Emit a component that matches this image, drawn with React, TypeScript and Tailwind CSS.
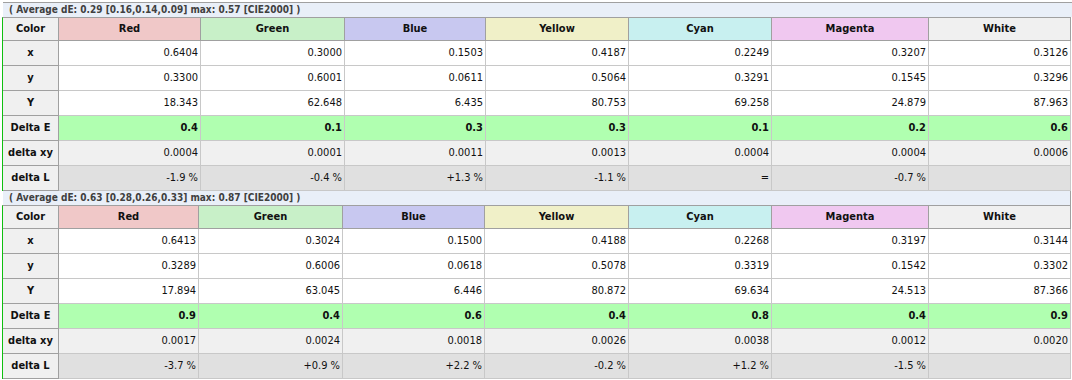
import React from "react";

type Panel = {
  caption: string;
  cols: string;
  rows: { label: string; values: string[]; kind: "w" | "de" | "xy" | "l" }[];
};

const headers = [
  { name: "Red", bg: "bg-[#f0c8c8]" },
  { name: "Green", bg: "bg-[#c8f0c8]" },
  { name: "Blue", bg: "bg-[#c8c8f0]" },
  { name: "Yellow", bg: "bg-[#f0f0c8]" },
  { name: "Cyan", bg: "bg-[#c8f0f0]" },
  { name: "Magenta", bg: "bg-[#f0c8f0]" },
  { name: "White", bg: "bg-[#f0f0f0]" },
];

const panels: Panel[] = [
  {
    caption: "( Average dE: 0.29 [0.16,0.14,0.09] max: 0.57 [CIE2000] )",
    cols: "grid-cols-[56px_142px_144px_141px_143px_143px_157px_142px]",
    rows: [
      { label: "x", kind: "w", values: ["0.6404", "0.3000", "0.1503", "0.4187", "0.2249", "0.3207", "0.3126"] },
      { label: "y", kind: "w", values: ["0.3300", "0.6001", "0.0611", "0.5064", "0.3291", "0.1545", "0.3296"] },
      { label: "Y", kind: "w", values: ["18.343", "62.648", "6.435", "80.753", "69.258", "24.879", "87.963"] },
      { label: "Delta E", kind: "de", values: ["0.4", "0.1", "0.3", "0.3", "0.1", "0.2", "0.6"] },
      { label: "delta xy", kind: "xy", values: ["0.0004", "0.0001", "0.0011", "0.0013", "0.0004", "0.0004", "0.0006"] },
      { label: "delta L", kind: "l", values: ["-1.9 %", "-0.4 %", "+1.3 %", "-1.1 %", "=", "-0.7 %", ""] },
    ],
  },
  {
    caption: "( Average dE: 0.63 [0.28,0.26,0.33] max: 0.87 [CIE2000] )",
    cols: "grid-cols-[56px_140px_144px_142px_144px_143px_157px_142px]",
    rows: [
      { label: "x", kind: "w", values: ["0.6413", "0.3024", "0.1500", "0.4188", "0.2268", "0.3197", "0.3144"] },
      { label: "y", kind: "w", values: ["0.3289", "0.6006", "0.0618", "0.5078", "0.3319", "0.1542", "0.3302"] },
      { label: "Y", kind: "w", values: ["17.894", "63.045", "6.446", "80.872", "69.634", "24.513", "87.366"] },
      { label: "Delta E", kind: "de", values: ["0.9", "0.4", "0.6", "0.4", "0.8", "0.4", "0.9"] },
      { label: "delta xy", kind: "xy", values: ["0.0017", "0.0024", "0.0018", "0.0026", "0.0038", "0.0012", "0.0020"] },
      { label: "delta L", kind: "l", values: ["-3.7 %", "+0.9 %", "+2.2 %", "-0.2 %", "+1.2 %", "-1.5 %", ""] },
    ],
  },
];

const rowBg: Record<string, string> = {
  w: "bg-white",
  de: "bg-[#b0ffb0] font-bold",
  xy: "bg-[#f0f0f0]",
  l: "bg-[#e0e0e0]",
};

function PanelView({ p, first }: { p: Panel; first: boolean }) {
  return (
    <div className="flex flex-col">
      <div
        className={
          "ml-[3px] w-[1068px] h-[14px] bg-[#e9eff8] border-r border-[#a0a0a0] flex items-center pl-[6px] text-[10px] font-bold text-[#404040] leading-[14px] whitespace-pre " +
          (first ? "box-content border-t mt-[2px]" : "")
        }
      >
        {p.caption}
      </div>
      <div className="pl-[2px]">
        <div className={"grid border-l border-t border-l-[#10c010] border-t-[#a0a0a0] w-[1069px] " + p.cols}>
          <div className="h-[23px] flex items-center justify-center font-bold text-[11px] bg-[#f0f0f0] border-r border-b border-[#a0a0a0]">
            Color
          </div>
          {headers.map((h) => (
            <div
              key={h.name}
              className={"h-[23px] flex items-center justify-center font-bold text-[11px] border-r border-b border-[#a0a0a0] " + h.bg}
            >
              {h.name}
            </div>
          ))}
          {p.rows.map((r) => (
            <React.Fragment key={r.label}>
              <div className="h-[25px] flex items-center justify-center font-bold text-[11px] bg-[#f0f0f0] border-r border-b border-[#a0a0a0]">
                {r.label}
              </div>
              {r.values.map((v, i) => (
                <div
                  key={i}
                  className={
                    "h-[25px] flex items-center justify-end pr-[2px] text-[11px] border-r border-b border-[#c8c8c8] " +
                    rowBg[r.kind]
                  }
                >
                  {v}
                </div>
              ))}
            </React.Fragment>
          ))}
        </div>
      </div>
    </div>
  );
}

export default function App() {
  return (
    <div
      className="w-[1072px] h-[380px] bg-white overflow-hidden text-[#111]"
      style={{ fontFamily: '"DejaVu Sans Condensed", "DejaVu Sans", sans-serif' }}
    >
      {panels.map((p, i) => (
        <PanelView key={i} p={p} first={i === 0} />
      ))}
    </div>
  );
}
